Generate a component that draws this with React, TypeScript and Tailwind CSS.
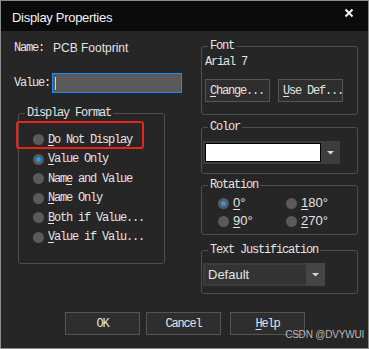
import React from 'react';

const mono = "font-['Liberation_Mono',monospace] text-[12px] tracking-[-1.2px] text-[#e4e4e4] whitespace-nowrap";
const sans = "font-['Liberation_Sans',Arial,sans-serif] text-[12px] text-[#e4e4e4] whitespace-nowrap";

const U: React.FC<{ children: React.ReactNode }> = ({ children }) => (
  <span className="underline underline-offset-[2px] decoration-1">{children}</span>
);

const Radio: React.FC<{ checked?: boolean }> = ({ checked }) => (
  <span className="w-[11px] h-[11px] rounded-full bg-[#5a5a5a] flex items-center justify-center shrink-0">
    {checked && <span className="w-[5px] h-[5px] rounded-full bg-[#1d9bff]" />}
  </span>
);

const Arrow = () => (
  <svg width="7" height="5" viewBox="0 0 7 5">
    <path d="M0 1 H7 L3.5 4.5 Z" fill="#d8d8d8" />
  </svg>
);

const formats: { label: React.ReactNode; checked?: boolean }[] = [
  { label: <><U>D</U>o Not Display</> },
  { label: <><U>V</U>alue Only</>, checked: true },
  { label: <>Nam<U>e</U> and Value</> },
  { label: <><U>N</U>ame Only</> },
  { label: <><U>B</U>oth if Value...</> },
  { label: <><U>V</U>alue if Valu...</> },
];

const Btn: React.FC<{ className?: string; children: React.ReactNode }> = ({ className, children }) => (
  <button className={`h-[23px] bg-[#2e2e2e] border border-[#555555] flex items-center ${mono} ${className ?? ''}`}>
    {children}
  </button>
);

const legend = `ml-[6px] px-[2px] leading-[12px] ${mono}`;
const group = 'w-[157px] border border-[#4e4e4e] rounded-[3px]';

export default function App() {
  return (
    <div className="relative w-[369px] h-[349px] border border-[#8c8c8c] bg-[#262626] flex flex-col overflow-hidden">
      {/* title bar */}
      <div className="h-[30px] bg-[#0b0b0b] flex items-center justify-between pl-[11px] pr-[14px] pt-[3px] shrink-0">
        <span className="font-['Liberation_Sans',Arial,sans-serif] text-[13px] tracking-[-0.3px] text-[#f2f2f2]">Display Properties</span>
        <svg width="10" height="10" viewBox="0 0 10 10" className="mt-[-9px]">
          <path d="M1.5 1.5 L8.5 8.5 M8.5 1.5 L1.5 8.5" stroke="#f4f4f4" strokeWidth="2" />
        </svg>
      </div>

      <div className="flex">
        {/* left column */}
        <div className="w-[189px] pl-[13px] flex flex-col">
          <div className="mt-[10px] h-[14px] flex items-center">
            <span className={`${mono} w-[39px]`}>Name:</span>
            <span className={sans}>PCB Footprint</span>
          </div>
          <div className="mt-[18px] h-[20px] flex items-center">
            <span className={`${mono} w-[38px]`}>Value:</span>
            <div className="w-[130px] h-[20px] bg-[#5a5a5a] border border-[#1a8cff] flex items-center pl-[2px]">
              <span className="w-[1px] h-[13px] bg-[#d0d0d0]" />
            </div>
          </div>

          <fieldset className="mt-[14px] ml-[4px] w-[147px] border border-[#4e4e4e] rounded-[3px]">
            <legend className={legend}>Display Format</legend>
            <div className="pt-[11px] pb-[16px] pl-[14px]">
              {formats.map((f, i) => (
                <div key={i} className="h-[19.5px] flex items-center gap-[4px]">
                  <Radio checked={f.checked} />
                  <span className={mono}>{f.label}</span>
                </div>
              ))}
            </div>
          </fieldset>
        </div>

        {/* right column */}
        <div className="pl-[11px] flex flex-col">
          <fieldset className={`mt-[9px] ${group}`}>
            <legend className={legend}>Font</legend>
            <div className="pl-[3px] pb-[12px]">
              <div className={`mt-[4px] h-[12px] leading-[12px] ${mono}`}>Arial 7</div>
              <div className="mt-[11px] flex gap-[8px]">
                <Btn className="w-[65px] pl-[4px]"><U>C</U>hange...</Btn>
                <Btn className="w-[65px] pl-[4px]"><U>U</U>se Def...</Btn>
              </div>
            </div>
          </fieldset>

          <fieldset className={`mt-[6px] ${group}`}>
            <legend className={legend}>Color</legend>
            <div className="pl-[1px] pb-[9px]">
              <div className="mt-[8px] w-[137px] h-[23px] bg-[#3d3d3d] flex items-center pl-[2px]">
                <div className="w-[116px] h-[19px] bg-white border border-black" />
                <div className="flex-1 flex items-center justify-center">
                  <Arrow />
                </div>
              </div>
            </div>
          </fieldset>

          <fieldset className={`mt-[5px] ${group}`}>
            <legend className={legend}>Rotation</legend>
            <div className="pl-[16px] pb-[4px]">
              <div className="mt-[3px] h-[18px] flex items-center">
                <div className="w-[68px] flex items-center gap-[4px]">
                  <Radio checked />
                  <span className={`${sans} text-[13px]`}><U>0</U>°</span>
                </div>
                <div className="flex items-center gap-[4px]">
                  <Radio />
                  <span className={`${sans} text-[13px]`}><U>1</U>80°</span>
                </div>
              </div>
              <div className="h-[18px] flex items-center">
                <div className="w-[68px] flex items-center gap-[4px]">
                  <Radio />
                  <span className={`${sans} text-[13px]`}><U>9</U>0°</span>
                </div>
                <div className="flex items-center gap-[4px]">
                  <Radio />
                  <span className={`${sans} text-[13px]`}><U>2</U>70°</span>
                </div>
              </div>
            </div>
          </fieldset>

          <fieldset className={`mt-[9px] ${group}`}>
            <legend className={legend}>Text Justification</legend>
            <div className="pl-[1px] pb-[7px]">
              <div className="mt-[7px] w-[122px] h-[23px] bg-[#3d3d3d] flex items-center pl-[2px]">
                <div className={`w-[101px] h-[19px] bg-[#333333] flex items-center pl-[3px] ${sans} text-[13px]`}>Default</div>
                <div className="flex-1 h-[23px] bg-[#454545] flex items-center justify-center">
                  <Arrow />
                </div>
              </div>
            </div>
          </fieldset>
        </div>
      </div>

      {/* bottom buttons */}
      <div className="mt-[18px] flex pl-[64px]">
        <Btn className="w-[75px] justify-center">OK</Btn>
        <Btn className="w-[75px] justify-center ml-[6px]">Cancel</Btn>
        <Btn className="w-[75px] justify-center ml-[9px]"><U>H</U>elp</Btn>
      </div>

      {/* annotation + watermark */}
      <div className="absolute left-[15px] top-[120px] w-[128px] h-[28px] border-2 border-[#e8231b] rounded-[3px]" />
      <span className="absolute right-[4px] bottom-[6px] font-['Liberation_Sans',Arial,sans-serif] text-[10px] tracking-[-0.2px] text-[#b8b8b8]">
        CSDN @DVYWUI
      </span>
    </div>
  );
}
